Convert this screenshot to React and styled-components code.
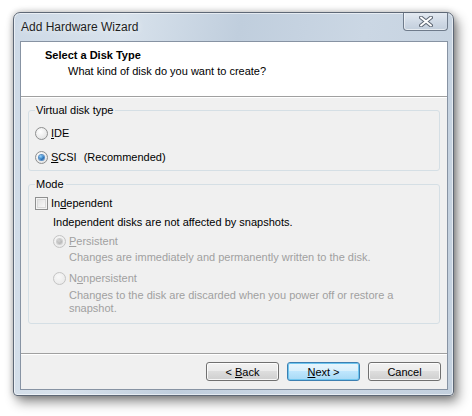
import React from "react";
import styled, { createGlobalStyle } from "styled-components";

const GlobalStyle = createGlobalStyle`
  html, body {
    margin: 0;
    padding: 0;
    background: #ffffff;
  }
  body {
    font-family: "Liberation Sans", Arial, sans-serif;
    font-size: 11px;
    color: #000;
  }
`;

const Page = styled.div`
  width: 472px;
  height: 416px;
  padding: 12px 0 0 13px;
  box-sizing: border-box;
`;

const Window = styled.div`
  width: 441px;
  height: 384px;
  box-sizing: border-box;
  display: flex;
  flex-direction: column;
  border: 1px solid #5e6876;
  border-radius: 7px 7px 4px 4px;
  background: linear-gradient(100deg, #cdd9e6 0%, #d8e2ec 22%, #c0cedd 45%, #cbd7e4 70%, #c3d0de 100%);
  box-shadow: inset 0 0 0 1px rgba(255, 255, 255, 0.55), 4px 6px 12px rgba(0, 0, 0, 0.45),
    0 0 6px rgba(0, 0, 0, 0.25);
  padding: 0 5px 5px 6px;
`;

const TitleBar = styled.div`
  height: 28px;
  display: flex;
  align-items: flex-start;
  justify-content: space-between;
`;

const Title = styled.div`
  font-size: 12px;
  color: #1e1e1e;
  padding: 7px 0 0 1px;
  text-shadow: 0 0 6px rgba(255, 255, 255, 0.9);
`;

const CloseButton = styled.div`
  width: 45px;
  height: 18px;
  box-sizing: border-box;
  border: 1px solid #6f7b8b;
  border-top: none;
  border-radius: 0 0 4px 4px;
  background: linear-gradient(#e3e9f1, #cfd9e5 55%, #c2cedc);
  box-shadow: inset 0 -1px 0 rgba(255, 255, 255, 0.6), inset 1px 0 0 rgba(255, 255, 255, 0.5);
  display: flex;
  align-items: center;
  justify-content: center;
`;

const Client = styled.div`
  flex: 1;
  display: flex;
  flex-direction: column;
  border: 1px solid #8793a3;
  background: #f0f0f0;
`;

const Header = styled.div`
  height: 55px;
  box-sizing: border-box;
  background: #fff;
  padding: 7px 0 0 24px;
  border-bottom: 1px solid #a0a0a0;
  box-shadow: 0 1px 0 #fff;
`;

const HeaderTitle = styled.div`
  font-weight: bold;
  line-height: 13px;
`;

const HeaderSub = styled.div`
  line-height: 13px;
  margin: 3px 0 0 23px;
`;

const Body = styled.div`
  flex: 1;
  padding: 7px 7px 0 7px;
  display: flex;
  flex-direction: column;
  gap: 7px;
`;

const Group = styled.fieldset`
  margin: 0;
  padding: 0 6px ${(p) => p.$bottom}px 6px;
  border: 1px solid #d5dfe5;
  border-radius: 3px;
  display: flex;
  flex-direction: column;
  min-width: 0;
`;

const Legend = styled.legend`
  padding: 0 2px 0 1px;
  margin-left: 0;
  line-height: 13px;
  color: #000;
`;

const Row = styled.label`
  display: flex;
  align-items: center;
  height: ${(p) => p.$h || 20}px;
  margin-top: ${(p) => p.$top || 0}px;
  margin-left: ${(p) => p.$indent || 0}px;
  color: ${(p) => (p.$disabled ? "#a0a0a0" : "#000")};
  gap: 3px;
`;

const Radio = styled.span`
  width: 13px;
  height: 13px;
  box-sizing: border-box;
  border-radius: 50%;
  border: 1px solid ${(p) => (p.$disabled ? "#c4c4c4" : "#8e8f8f")};
  background: ${(p) =>
    p.$disabled
      ? "radial-gradient(circle at 40% 35%, #f8f8f8, #e6e6e6)"
      : "radial-gradient(circle at 40% 35%, #ffffff, #dcdcdc)"};
  display: flex;
  align-items: center;
  justify-content: center;
  flex: none;
  &::after {
    content: "";
    display: ${(p) => (p.$checked ? "block" : "none")};
    width: 5px;
    height: 5px;
    border-radius: 50%;
    background: ${(p) =>
      p.$disabled
        ? "radial-gradient(circle at 40% 35%, #d4d4d4, #a8a8a8)"
        : "radial-gradient(circle at 35% 30%, #8fd3ff, #1a63ad 70%, #0d3f7a)"};
    box-shadow: ${(p) => (p.$disabled ? "0 0 0 1px #cfcfcf" : "0 0 0 1px #5b8fc4")};
  }
`;

const Check = styled.span`
  width: 13px;
  height: 13px;
  box-sizing: border-box;
  border: 1px solid #8e8f8f;
  background: linear-gradient(135deg, #dcdcdc, #ffffff);
  box-shadow: inset 0 0 0 1px #f4f4f4, inset 0 0 0 2px #d9d9d9;
  flex: none;
`;

const Key = styled.span`
  text-decoration: underline;
  text-underline-offset: 1px;
`;

const Recommended = styled.span`
  margin-left: 4px;
`;

const Text = styled.div`
  line-height: 13px;
  margin-top: ${(p) => p.$top || 0}px;
  margin-left: ${(p) => p.$indent || 0}px;
  color: ${(p) => (p.$disabled ? "#a0a0a0" : "#000")};
  max-width: ${(p) => p.$max || 400}px;
`;

const Footer = styled.div`
  border-top: 1px solid #a0a0a0;
  box-shadow: inset 0 1px 0 #fff;
  display: flex;
  justify-content: flex-end;
  gap: 8px;
  padding: 8px 6px 8px 0;
`;

const Button = styled.div`
  width: 73px;
  height: 19px;
  box-sizing: border-box;
  border: 1px solid ${(p) => (p.$default ? "#3c7fb1" : "#707070")};
  border-radius: 3px;
  background: ${(p) =>
    p.$default
      ? "linear-gradient(#eaf6fd 0%, #d9f0fc 45%, #bee6fd 50%, #a7d9f5 100%)"
      : "linear-gradient(#f2f2f2 0%, #ebebeb 45%, #dddddd 50%, #cfcfcf 100%)"};
  box-shadow: inset 0 0 0 1px ${(p) => (p.$default ? "#6fc6ef" : "rgba(255,255,255,0.8)")};
  display: flex;
  align-items: center;
  justify-content: center;
  font-size: 11px;
`;

function CloseGlyph() {
  return (
    <svg width="14" height="11" viewBox="0 0 14 11">
      <path d="M2 1.5 L12 9.5 M12 1.5 L2 9.5" stroke="#5f6875" strokeWidth="4" strokeLinecap="round" />
      <path d="M2 1.5 L12 9.5 M12 1.5 L2 9.5" stroke="#ffffff" strokeWidth="2" strokeLinecap="round" />
    </svg>
  );
}

export default function App() {
  return (
    <>
      <GlobalStyle />
      <Page>
        <Window>
          <TitleBar>
            <Title>Add Hardware Wizard</Title>
            <CloseButton>
              <CloseGlyph />
            </CloseButton>
          </TitleBar>
          <Client>
            <Header>
              <HeaderTitle>Select a Disk Type</HeaderTitle>
              <HeaderSub>What kind of disk do you want to create?</HeaderSub>
            </Header>
            <Body>
              <Group $bottom={3}>
                <Legend>Virtual disk type</Legend>
                <Row $top={6}>
                  <Radio />
                  <span>
                    <Key>I</Key>DE
                  </span>
                </Row>
                <Row $top={4}>
                  <Radio $checked />
                  <span>
                    <Key>S</Key>CSI
                  </span>
                  <Recommended>(Recommended)</Recommended>
                </Row>
              </Group>
              <Group $bottom={8}>
                <Legend>Mode</Legend>
                <Row $top={4} $h={16}>
                  <Check />
                  <span>
                    In<Key>d</Key>ependent
                  </span>
                </Row>
                <Text $top={5} $indent={18}>
                  Independent disks are not affected by snapshots.
                </Text>
                <Row $top={4} $h={16} $indent={18} $disabled>
                  <Radio $checked $disabled />
                  <span>
                    <Key>P</Key>ersistent
                  </span>
                </Row>
                <Text $top={2} $indent={34} $disabled>
                  Changes are immediately and permanently written to the disk.
                </Text>
                <Row $top={6} $h={16} $indent={18} $disabled>
                  <Radio $disabled />
                  <span>
                    N<Key>o</Key>npersistent
                  </span>
                </Row>
                <Text $top={3} $indent={34} $disabled $max={340}>
                  Changes to the disk are discarded when you power off or restore a snapshot.
                </Text>
              </Group>
            </Body>
            <Footer>
              <Button>
                &lt;&nbsp;<Key>B</Key>ack
              </Button>
              <Button $default>
                <Key>N</Key>ext &gt;
              </Button>
              <Button>Cancel</Button>
            </Footer>
          </Client>
        </Window>
      </Page>
    </>
  );
}
